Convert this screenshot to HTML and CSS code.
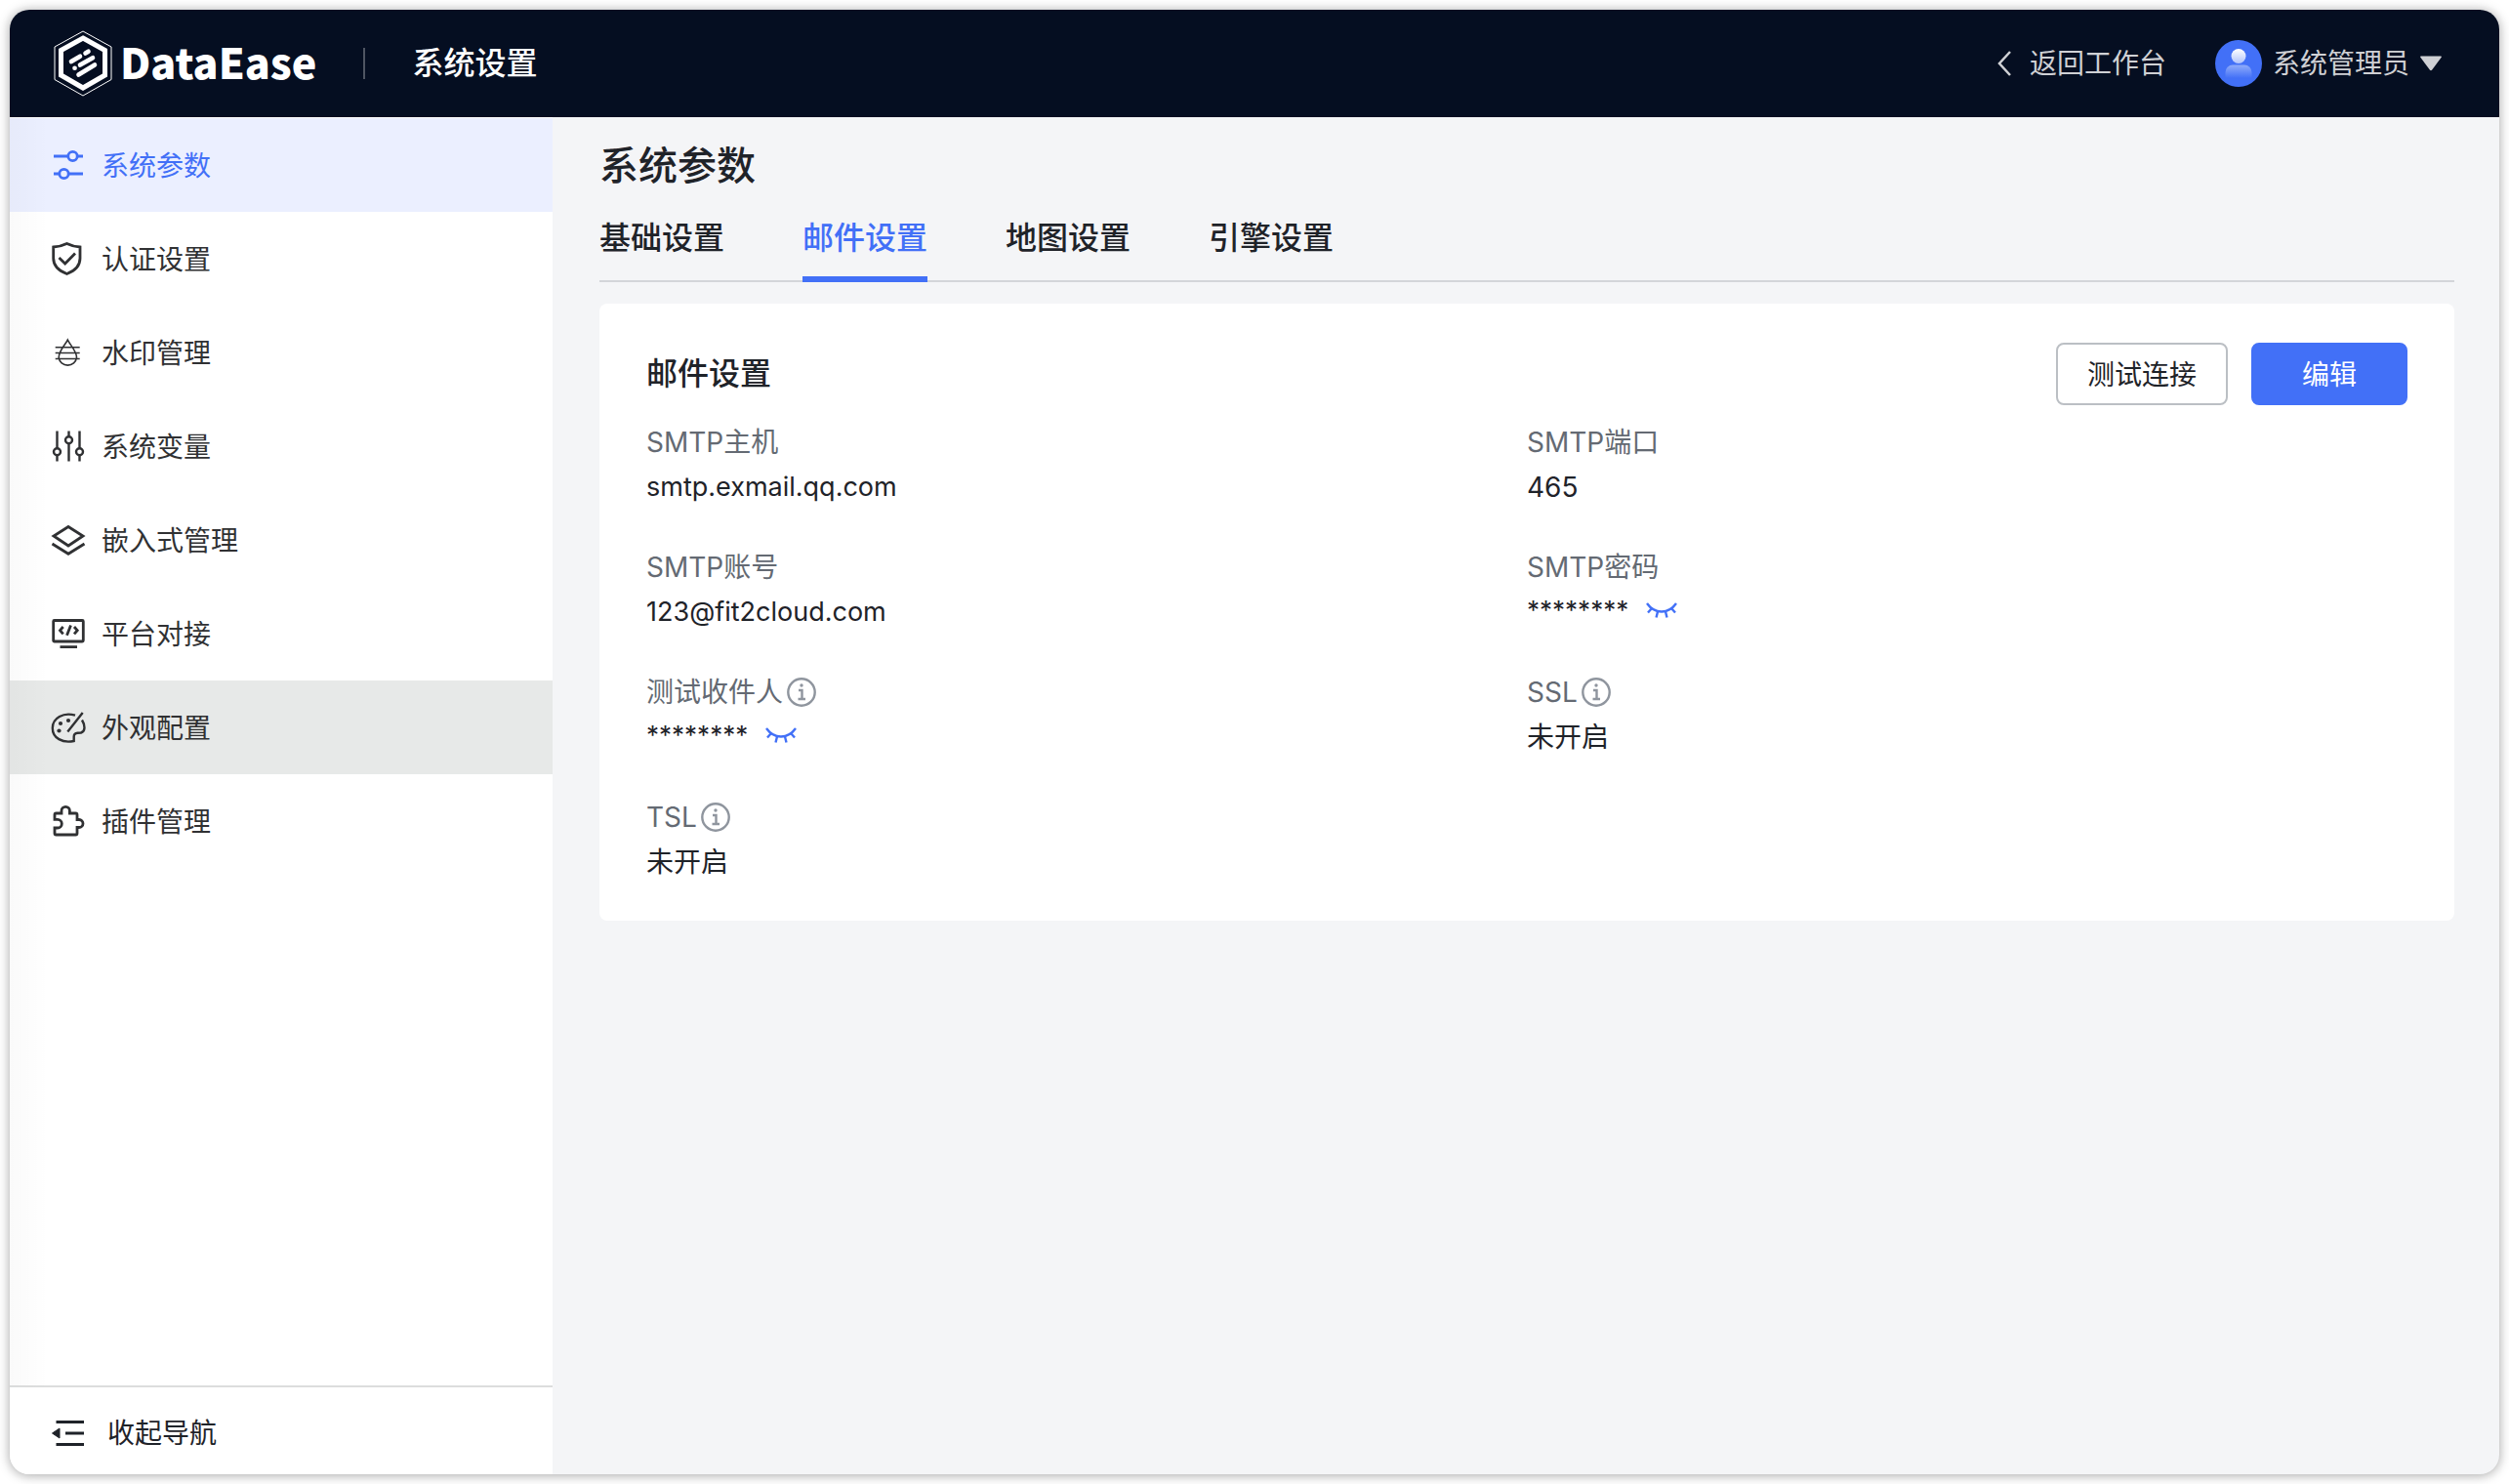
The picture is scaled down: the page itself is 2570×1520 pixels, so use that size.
FILE: index.html
```html
<!DOCTYPE html>
<html lang="zh-CN">
<head>
<meta charset="utf-8">
<meta name="viewport" content="width=device-width, initial-scale=1">
<title>DataEase 系统设置</title>
<link rel="stylesheet" href="styles.css">
</head>
<body>
<div class="window">
  <header class="topbar">
    <a class="brand" href="#">
      <svg class="brand-mark" viewBox="0 0 60 68" aria-hidden="true">
        <path d="M30 1 59 17V50.500L30 67 1 50.500V17Z" fill="none" stroke="#fff" stroke-width="1"/>
        <path d="M30 8 52.500 20.500V46L30 59 7.500 46V20.500Z" fill="none" stroke="#fff" stroke-width="5"/>
        <path d="M18 32 27 26.700M32.500 23.500 35.500 21.700M27 35.500 40 28.200M21.500 38.700h.1M25.500 45.500 42 35.500" fill="none" stroke="#fff" stroke-width="4.600" stroke-linecap="round"/>
      </svg>
      <span class="brand-name">DataEase</span>
    </a>
    <span class="topbar-title">系统设置</span>
    <a class="back" href="#">
      <svg class="back-icon" viewBox="0 0 16 28" aria-hidden="true"><path d="M14 2 3 14 14 26" fill="none" stroke="currentColor" stroke-width="2.500"/></svg>
      返回工作台
    </a>
    <button class="user" type="button">
      <svg class="avatar" viewBox="0 0 48 48" aria-hidden="true">
        <defs>
          <linearGradient id="head" x1="0" y1="0" x2="0" y2="1"><stop offset="0" stop-color="#fff"/><stop offset="1" stop-color="#b0c3fb"/></linearGradient>
          <linearGradient id="torso" x1="0" y1="0" x2="0" y2="1"><stop offset="0" stop-color="#90acfa"/><stop offset="1" stop-color="#4270f7"/></linearGradient>
        </defs>
        <circle cx="24" cy="24" r="24" fill="#4270f7"/>
        <circle cx="24" cy="16.500" r="7.500" fill="url(#head)"/>
        <path d="M10.500 39V33a7.500 7.500 0 0 1 7.500-7.500H30a7.500 7.500 0 0 1 7.500 7.500V39Z" fill="url(#torso)"/>
      </svg>
      系统管理员
      <svg class="caret" viewBox="0 0 22 16" aria-hidden="true"><path d="M1 .5H21Q22.500.5 21.500 2L12.200 14.500Q11 16 9.800 14.500L.5 2Q-.5.5 1 .5Z" fill="currentColor"/></svg>
    </button>
  </header>

  <div class="layout">
    <aside class="sidebar">
      <nav class="menu">
        <a class="menu-item is-active" href="#">
          <svg class="icon" viewBox="0 0 36 36" stroke-width="2.800"><path d="M3 9H17.500M27.500 9H33M3 27H8.500M18.500 27H33"/><circle cx="22.500" cy="9" r="4.700"/><circle cx="13.500" cy="27" r="4.700"/></svg>
          <span>系统参数</span>
        </a>
        <a class="menu-item" href="#">
          <svg class="icon" viewBox="0 0 36 36" stroke-width="2.800"><path d="M16.500 2.500Q22.500 5.500 30 6V17.500C30 25.500 24.500 30.500 16.500 33.500 8.500 30.500 2.700 25.500 2.700 17.500V6Q10.500 5.500 16.500 2.500Z"/><path d="M8.500 17 14.700 23 25 12.500"/></svg>
          <span>认证设置</span>
        </a>
        <a class="menu-item" href="#">
          <svg class="icon" viewBox="0 0 36 36" stroke-width="1.600"><path d="M17.300 5.200C15 10 8.200 16.500 8.200 23.200A9.200 8.800 0 0 0 26.500 23.200C26.500 16.500 19.600 10 17.300 5.200ZM4.700 12.700H29.700M4.700 18.500H29.700M4.700 24.500H29.700"/></svg>
          <span>水印管理</span>
        </a>
        <a class="menu-item" href="#">
          <svg class="icon" viewBox="0 0 36 36" stroke-width="2.400"><path d="M6.500 2.500V20.200M6.500 27.200V33.500M18.500 2.500V8.200M18.500 15.200V33.500M29.500 2.500V20.200M29.500 27.200V33.500"/><circle cx="6.500" cy="23.700" r="3.500"/><circle cx="18.500" cy="11.700" r="3.500"/><circle cx="29.500" cy="23.700" r="3.500"/></svg>
          <span>系统变量</span>
        </a>
        <a class="menu-item" href="#">
          <svg class="icon" viewBox="0 0 36 36" stroke-width="2.800"><path d="M18 4.500 33 14 18 24 3 14ZM1.500 22 18 32.300 34.500 22"/></svg>
          <span>嵌入式管理</span>
        </a>
        <a class="menu-item" href="#">
          <svg class="icon" viewBox="0 0 36 36" stroke-width="2.800"><rect x="2.700" y="4.500" width="30.600" height="21.500" rx="1"/><path d="M9.500 31.700H27M12.700 11 9.500 14.700 12.700 18.400M24 11 27.200 14.700 24 18.400M20.500 9.500 16.500 19.700"/></svg>
          <span>平台对接</span>
        </a>
        <a class="menu-item is-hover" href="#">
          <svg class="icon" viewBox="0 0 36 36" stroke-width="2.400"><path d="M25 5.700C13 2 1.800 8.500 1.800 18.700 1.800 29 12 34.500 23.700 32V27.500Q23.700 24 27.500 23.700L31 23.500C35.500 22 35.500 16 32 10.500M32.700 3 17.300 22.500"/><g fill="currentColor" stroke="none"><circle cx="10" cy="14" r="2.100"/><circle cx="18" cy="11" r="2.100"/><circle cx="8.500" cy="21.500" r="2.100"/></g></svg>
          <span>外观配置</span>
        </a>
        <a class="menu-item" href="#">
          <svg class="icon" viewBox="0 0 36 36" stroke-width="2.800"><path d="M5.500 10H11V7.500a4.200 4.200 0 0 1 8.400 0V10H25.500Q27 10 27 11.500V16.500H29a4 4 0 0 1 0 8H27V30.500Q27 32 25.500 32H5.500Q4 32 4 30.500V25H7a4.300 4.300 0 0 0 0-8.600H4V11.500Q4 10 5.500 10Z"/></svg>
          <span>插件管理</span>
        </a>
      </nav>
      <button class="collapse" type="button">
        <svg class="icon" viewBox="0 0 36 36" stroke-width="3"><path d="M5.500 6.500H34M15 18H34M5.500 29.500H34"/><path d="M1.500 18 9 13V23Z" fill="currentColor" stroke-width="1"/></svg>
        收起导航
      </button>
    </aside>

    <main class="content">
      <h1 class="page-title">系统参数</h1>
      <nav class="tabs">
        <a class="tab" href="#">基础设置</a>
        <a class="tab is-current" href="#">邮件设置</a>
        <a class="tab" href="#">地图设置</a>
        <a class="tab" href="#">引擎设置</a>
      </nav>
      <section class="card">
        <div class="card-head">
          <h2 class="card-title">邮件设置</h2>
          <button class="btn" type="button">测试连接</button>
          <button class="btn btn-primary" type="button">编辑</button>
        </div>
        <dl class="fields">
          <div class="field"><dt>SMTP主机</dt><dd class="latin">smtp.exmail.qq.com</dd></div>
          <div class="field"><dt>SMTP端口</dt><dd>465</dd></div>
          <div class="field"><dt>SMTP账号</dt><dd class="latin">123@fit2cloud.com</dd></div>
          <div class="field"><dt>SMTP密码</dt><dd class="masked">********
            <button class="reveal" type="button" aria-label="显示"><svg class="eye" viewBox="0 0 32 16"><path d="M1 1C9 12.300 23 12.300 31 1M6 6 2 10.500M12 9.500 10.500 15.500M20 9.500 21.500 15.500M26 6 30 10.500"/></svg></button></dd></div>
          <div class="field"><dt>测试收件人<svg class="info" viewBox="0 0 30 30"><circle cx="15" cy="15" r="13.700"/><path d="M12 13H15.500V22M11.500 22H19"/><circle cx="15" cy="8" r="1.700" class="info-dot"/></svg></dt><dd class="masked">********
            <button class="reveal" type="button" aria-label="显示"><svg class="eye" viewBox="0 0 32 16"><path d="M1 1C9 12.300 23 12.300 31 1M6 6 2 10.500M12 9.500 10.500 15.500M20 9.500 21.500 15.500M26 6 30 10.500"/></svg></button></dd></div>
          <div class="field"><dt>SSL<svg class="info" viewBox="0 0 30 30"><circle cx="15" cy="15" r="13.700"/><path d="M12 13H15.500V22M11.500 22H19"/><circle cx="15" cy="8" r="1.700" class="info-dot"/></svg></dt><dd>未开启</dd></div>
          <div class="field"><dt>TSL<svg class="info" viewBox="0 0 30 30"><circle cx="15" cy="15" r="13.700"/><path d="M12 13H15.500V22M11.500 22H19"/><circle cx="15" cy="8" r="1.700" class="info-dot"/></svg></dt><dd>未开启</dd></div>
        </dl>
      </section>
    </main>
  </div>
</div>
</body>
</html>
```
FILE: styles.css
```css
* {
  box-sizing: border-box;
}

body {
  margin: 0;
  padding: 10px;
  min-height: 100vh;
  display: flex;
  background: #fff;
  color: #1f2329;
  font: 400 28px/44px Inter, "Noto Sans CJK SC", sans-serif;
}

a {
  color: inherit;
  text-decoration: none;
}

button {
  margin: 0;
  padding: 0;
  border: 0;
  background: none;
  color: inherit;
  font: inherit;
  cursor: pointer;
}

svg {
  display: block;
  flex: none;
}

.window {
  flex: 1;
  min-width: 0;
  display: flex;
  flex-direction: column;
  overflow: hidden;
  border-radius: 20px;
  background: #f4f5f7;
  box-shadow: 0 1px 12px rgba(0, 0, 0, 0.36);
}

/* Top bar */
.topbar {
  display: flex;
  align-items: center;
  height: 110px;
  padding: 0 59px 0 45px;
  background: #050e21;
  color: #cfd0d4;
}

.brand {
  display: flex;
  align-items: center;
  gap: 8px;
  color: #fff;
}

.brand-mark {
  width: 60px;
  height: 68px;
}

.brand-name {
  padding-bottom: 6px;
  font: 900 43px/62px "Noto Sans CJK SC", sans-serif;
}

.topbar-title {
  display: flex;
  align-items: center;
  gap: 48px;
  margin-left: 48px;
  margin-right: auto;
  color: #fff;
  font-size: 32px;
  font-weight: 500;
}

.topbar-title::before {
  content: "";
  width: 2px;
  height: 32px;
  background: #4f5562;
}

.back,
.user {
  display: flex;
  align-items: center;
}

.back {
  gap: 18px;
  margin-right: 50px;
}

.back-icon {
  width: 16px;
  height: 28px;
}

.user {
  gap: 11px;
}

.avatar {
  width: 48px;
  height: 48px;
}

.caret {
  width: 22px;
  height: 16px;
}

.layout {
  flex: 1;
  display: flex;
}

/* Sidebar */
.sidebar {
  position: relative;
  display: flex;
  flex-direction: column;
  flex: none;
  width: 556px;
  padding-top: 1px;
  background: #fff;
  color: #303133;
}

.sidebar::after {
  content: "";
  position: absolute;
  inset: 0 auto 90px 0;
  width: 40px;
  background: linear-gradient(to right, rgba(0, 0, 0, 0.02), transparent);
  pointer-events: none;
}

.menu {
  flex: 1;
}

.menu-item {
  display: flex;
  align-items: center;
  gap: 16px;
  height: 96px;
  padding-left: 42px;
}

.menu-item span {
  padding-top: 2px;
}

.menu-item.is-active {
  background: #ebefff;
  color: #4270f7;
}

.menu-item.is-hover {
  background: #e7e9e8;
}

.icon {
  width: 36px;
  height: 36px;
  fill: none;
  stroke: currentColor;
}

.collapse {
  display: flex;
  align-items: center;
  gap: 22px;
  height: 91px;
  padding: 4px 0 0 42px;
  border-top: 2px solid #dcdddd;
  color: #1f2329;
}

/* Content */
.content {
  flex: 1;
  min-width: 0;
  padding: 22px 46px 48px 48px;
}

.page-title {
  margin: 0;
  font-size: 40px;
  line-height: 56px;
  font-weight: 500;
}

.tabs {
  display: flex;
  gap: 80px;
  border-bottom: 2px solid #d3d5d9;
}

.tab {
  height: 91px;
  margin-bottom: -2px;
  padding-top: 24px;
  border-bottom: 6px solid transparent;
  font-size: 32px;
  font-weight: 500;
}

.tab.is-current {
  border-color: #4270f7;
  color: #4270f7;
}

.card {
  margin-top: 22px;
  padding: 40px 48px 38px;
  border-radius: 8px;
  background: #fff;
}

.card-head {
  display: flex;
  align-items: center;
  gap: 24px;
}

.card-title {
  margin: 0 auto 0 0;
  font-size: 32px;
  font-weight: 500;
}

.btn {
  min-width: 160px;
  height: 64px;
  padding: 2px 30px 0;
  border: 2px solid #bbbfc4;
  border-radius: 8px;
}

.btn-primary {
  border-color: #4270f7;
  background: #4270f7;
  color: #fff;
}

.fields {
  display: grid;
  grid-template-columns: 1fr 1fr;
  row-gap: 38px;
  margin: 16px 0 0;
}

.field dt,
.field dd {
  display: flex;
  align-items: center;
  height: 44px;
  margin: 0;
}

.field dt {
  gap: 4px;
  margin-bottom: 2px;
  color: #646a73;
}

.field dd {
  gap: 18px;
}

.field .latin {
  font-size: 27px;
}

.field .masked {
  height: 40px;
  font-size: 26px;
}

.info {
  width: 30px;
  height: 30px;
  fill: none;
  stroke: #8f959e;
  stroke-width: 2.4;
}

.info-dot {
  fill: #8f959e;
  stroke: none;
}

.eye {
  width: 32px;
  height: 16px;
  fill: none;
  stroke: #4270f7;
  stroke-width: 2.4;
}
```
